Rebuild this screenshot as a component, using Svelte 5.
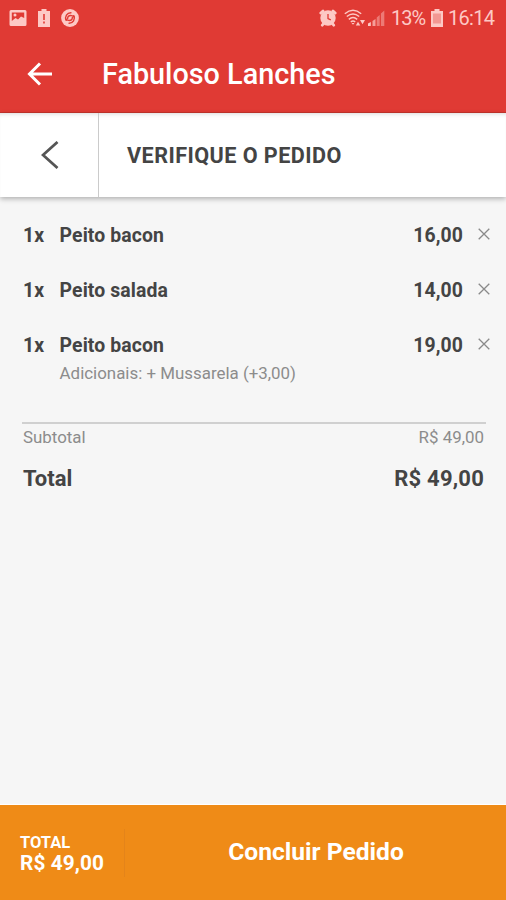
<script lang="ts">
	interface Item {
		quantity: number;
		name: string;
		price: string;
		extras?: string;
	}

	let items: Item[] = [
		{ quantity: 1, name: 'Peito bacon', price: '16,00' },
		{ quantity: 1, name: 'Peito salada', price: '14,00' },
		{ quantity: 1, name: 'Peito bacon', price: '19,00', extras: '+ Mussarela (+3,00)' }
	];

	const total = 'R$ 49,00';

	function remove(index: number) {
		items = items.filter((_, i) => i !== index);
	}
</script>

<div class="screen">
	<header>
		<div class="status">
			<div class="group left">
				<svg width="18" height="18" viewBox="0 0 18 18">
					<path
						fill="currentColor"
						fill-rule="evenodd"
						d="M2 1h14q1.500 0 1.500 1.500v13q0 1.500-1.500 1.500H2Q.5 17 .5 15.500v-13Q.5 1 2 1zM2.800 3.500v8.500l3.700-3 2.500 1.500 3-3 3.200 1.500V3.500z"
					/>
					<circle cx="6" cy="6" r="1.500" fill="currentColor" />
				</svg>
				<svg width="12" height="18" viewBox="0 0 12 18">
					<path
						fill="currentColor"
						fill-rule="evenodd"
						d="M3.500 0h5v2H12v16H0V2h3.500zM5.200 5v6h1.600V5zM5.200 12.500v2h1.600v-2z"
					/>
				</svg>
				<svg width="18" height="18" viewBox="0 0 19 19">
					<circle cx="9.500" cy="9.500" r="9.400" fill="currentColor" />
					<g fill="none" stroke="#e03a34" stroke-width="1.500" stroke-linecap="round">
						<path d="M10.500 4a5.500 5.500 0 0 0-5 8M7 10q0-3.500 4-3 2 .3 3 1.500" />
						<path d="M8.500 15a5.500 5.500 0 0 0 5-8M12 9q0 3.500-4 3-2-.3-3-1.500" />
					</g>
				</svg>
			</div>
			<div class="group right">
				<svg width="18" height="18" viewBox="0 0 18 18">
					<g fill="none" stroke="currentColor" stroke-width="2.800" stroke-linecap="round">
						<path d="M1.800 4 4 2M16.200 4 14 2M3.300 16.200l1.700-2M14.700 16.200l-1.700-2" />
					</g>
					<circle cx="9" cy="9" r="7.700" fill="currentColor" />
					<path d="M9 5v4.500l2.800 1.300" fill="none" stroke="#e03a34" stroke-width="1.300" />
				</svg>
				<svg class="wifi" width="22" height="18" viewBox="0 0 22 18">
					<g fill="none" stroke="currentColor" stroke-width="1.500">
						<path d="M.8 4.700q8.200-7 16.400 0M2.800 7.500q6.200-5 12.400 0M4.800 10.300q4.200-3.400 8.400 0M6.800 13q2.200-1.800 4.400 0" />
					</g>
					<path
						d="M7.500 14h3L9 15.800zM11.800 16.500l2.200-3.800 2.300 3.800zM16 11h5l-2.500 4.200z"
						fill="currentColor"
					/>
				</svg>
				<svg class="signal" width="17" height="18" viewBox="0 0 17 18">
					<path d="M0 14.500 2.800 13v4H0z" fill="currentColor" />
					<path d="M4.500 12 7.500 10v7h-3z" fill="currentColor" opacity=".7" />
					<path
						d="M8.700 8.500l3-2.500v11h-3zM12.900 4.500l3.400-3V17h-3.400z"
						fill="currentColor"
						opacity=".45"
					/>
				</svg>
				<span class="percent">13%</span>
				<svg class="battery" width="12" height="18" viewBox="0 0 12 18">
					<path d="M3.500 0h5v2H12v16H0V2h3.500z" fill="currentColor" />
					<path d="M2 4.500h8v10H2z" fill="#e03a34" opacity=".35" />
				</svg>
				<span class="clock">16:14</span>
			</div>
		</div>
		<div class="toolbar">
			<button class="back" aria-label="Voltar">
				<svg width="26" height="24" viewBox="0 0 26 24">
					<path d="M25 12H3M13 1.500 2.500 12 13 22.500" />
				</svg>
			</button>
			<h1>Fabuloso Lanches</h1>
		</div>
	</header>

	<nav>
		<button class="previous" aria-label="Anterior">
			<svg width="18" height="28" viewBox="0 0 18 28">
				<path d="M16.500 1 2 14l14.500 13" />
			</svg>
		</button>
		<h2>VERIFIQUE O PEDIDO</h2>
	</nav>

	<main>
		<ul>
			{#each items as item, i}
				<li>
					<span class="quantity">{item.quantity}x</span>
					<div class="description">
						<p class="name">{item.name}</p>
						{#if item.extras}
							<p class="extras">Adicionais: {item.extras}</p>
						{/if}
					</div>
					<span class="price">{item.price}</span>
					<button class="remove" aria-label="Remover" on:click={() => remove(i)}>
						<svg width="12" height="12" viewBox="0 0 12 12">
							<path d="m.7.7 10.600 10.600M11.300.7.7 11.300" />
						</svg>
					</button>
				</li>
			{/each}
		</ul>

		<div class="summary">
			<div class="subtotal">
				<span>Subtotal</span>
				<span class="value">{total}</span>
			</div>
			<div class="total">
				<span class="label">Total</span>
				<span class="value">{total}</span>
			</div>
		</div>
	</main>

	<footer>
		<div class="amount">
			<span class="caption">TOTAL</span>
			<span class="sum">{total}</span>
		</div>
		<button class="finish"><span>Concluir Pedido</span></button>
	</footer>
</div>

<style>
	:global(body) {
		margin: 0;
	}

	.screen {
		height: 900px;
		display: flex;
		flex-direction: column;
		overflow: hidden;
		background: #f6f6f6;
		color: #444;
		font-family: Roboto, 'Liberation Sans', sans-serif;
		font-weight: 700;
	}

	h1,
	h2,
	p,
	ul {
		margin: 0;
		padding: 0;
		list-style: none;
	}

	span,
	p,
	h1,
	h2 {
		white-space: nowrap;
	}

	button {
		padding: 0;
		border: 0;
		background: none;
		color: inherit;
		font: inherit;
		display: flex;
		align-items: center;
	}

	svg {
		display: block;
		flex: none;
	}

	button path {
		fill: none;
		stroke: currentColor;
	}

	header {
		flex: none;
		height: 113px;
		box-sizing: border-box;
		border-bottom: 1px solid #c5342c;
		background: #e03a34;
		color: #fff;
	}

	.status {
		height: 35px;
		padding: 0 11px 0 9px;
		display: flex;
		align-items: center;
		justify-content: space-between;
		color: #fdc9c5;
		font-weight: 400;
		font-size: 20px;
	}

	.group {
		display: flex;
		align-items: center;
	}

	.left {
		gap: 11px;
	}

	.wifi {
		margin-left: 7px;
	}

	.signal {
		margin-left: 2px;
	}

	.percent {
		width: 34px;
		margin-left: 6px;
		letter-spacing: -1px;
	}

	.battery {
		margin-left: 6px;
	}

	.clock {
		width: 47px;
		margin-left: 5px;
		letter-spacing: -0.7px;
	}

	.toolbar {
		height: 77px;
		padding-left: 27px;
		display: flex;
		align-items: center;
	}

	.back path {
		stroke-width: 3;
	}

	h1 {
		margin-left: 49px;
		font-weight: 500;
		font-size: 28.8px;
	}

	nav {
		flex: none;
		height: 84px;
		display: flex;
		align-items: center;
		background: #fff;
		box-shadow: 0 2px 5px rgba(0, 0, 0, 0.28), inset 0 4px 4px -3px rgba(0, 0, 0, 0.15);
	}

	.previous {
		width: 99px;
		height: 84px;
		padding-left: 41px;
		box-sizing: border-box;
		border-right: 1px solid #cbcbcb;
	}

	.previous path {
		stroke: #555;
		stroke-width: 2.8;
	}

	h2 {
		margin-left: 28px;
		font-size: 21.6px;
		letter-spacing: 0.45px;
	}

	main {
		flex: 1;
		padding: 27px 20px 0 22px;
	}

	ul {
		display: grid;
		gap: 31px;
	}

	li {
		display: flex;
		align-items: flex-start;
		margin: 0 -4px 0 1px;
		font-size: 19.4px;
		line-height: 24px;
		letter-spacing: 0.1px;
	}

	.quantity {
		width: 36.6px;
	}

	.description {
		flex: 1;
	}

	.extras {
		margin-top: 3px;
		color: #8c8c8c;
		font-weight: 400;
		font-size: 16.9px;
		letter-spacing: 0;
	}

	.remove {
		height: 20px;
		margin-left: 15px;
		color: #8a8a8a;
	}

	.remove path {
		stroke-width: 1.3;
	}

	.summary {
		margin-top: 37px;
		border-top: 2px solid #d0d0d0;
	}

	.subtotal,
	.total {
		display: flex;
		justify-content: space-between;
		padding: 0 2px 0 1px;
	}

	.subtotal {
		color: #8c8c8c;
		font-weight: 400;
		font-size: 16.9px;
		line-height: 27px;
	}

	.total {
		padding-top: 13px;
		font-size: 22px;
		line-height: 30px;
	}

	.total .value {
		letter-spacing: 0.2px;
	}

	footer {
		flex: none;
		height: 95px;
		display: flex;
		align-items: center;
		background: #ef8b17;
		box-shadow: 0 -1px 1px #fff;
		color: #fff;
	}

	.amount {
		width: 125px;
		height: 48px;
		padding-left: 20px;
		box-sizing: border-box;
		display: flex;
		flex-direction: column;
		justify-content: center;
		border-right: 1px solid #e4841a;
	}

	.caption {
		font-size: 16.5px;
		line-height: 20px;
	}

	.sum {
		font-size: 20.8px;
		line-height: 20px;
		letter-spacing: 0.1px;
	}

	.finish {
		flex: 1;
		height: 95px;
		padding: 0 0 2px 1px;
		justify-content: center;
		font-size: 24.6px;
	}
</style>
